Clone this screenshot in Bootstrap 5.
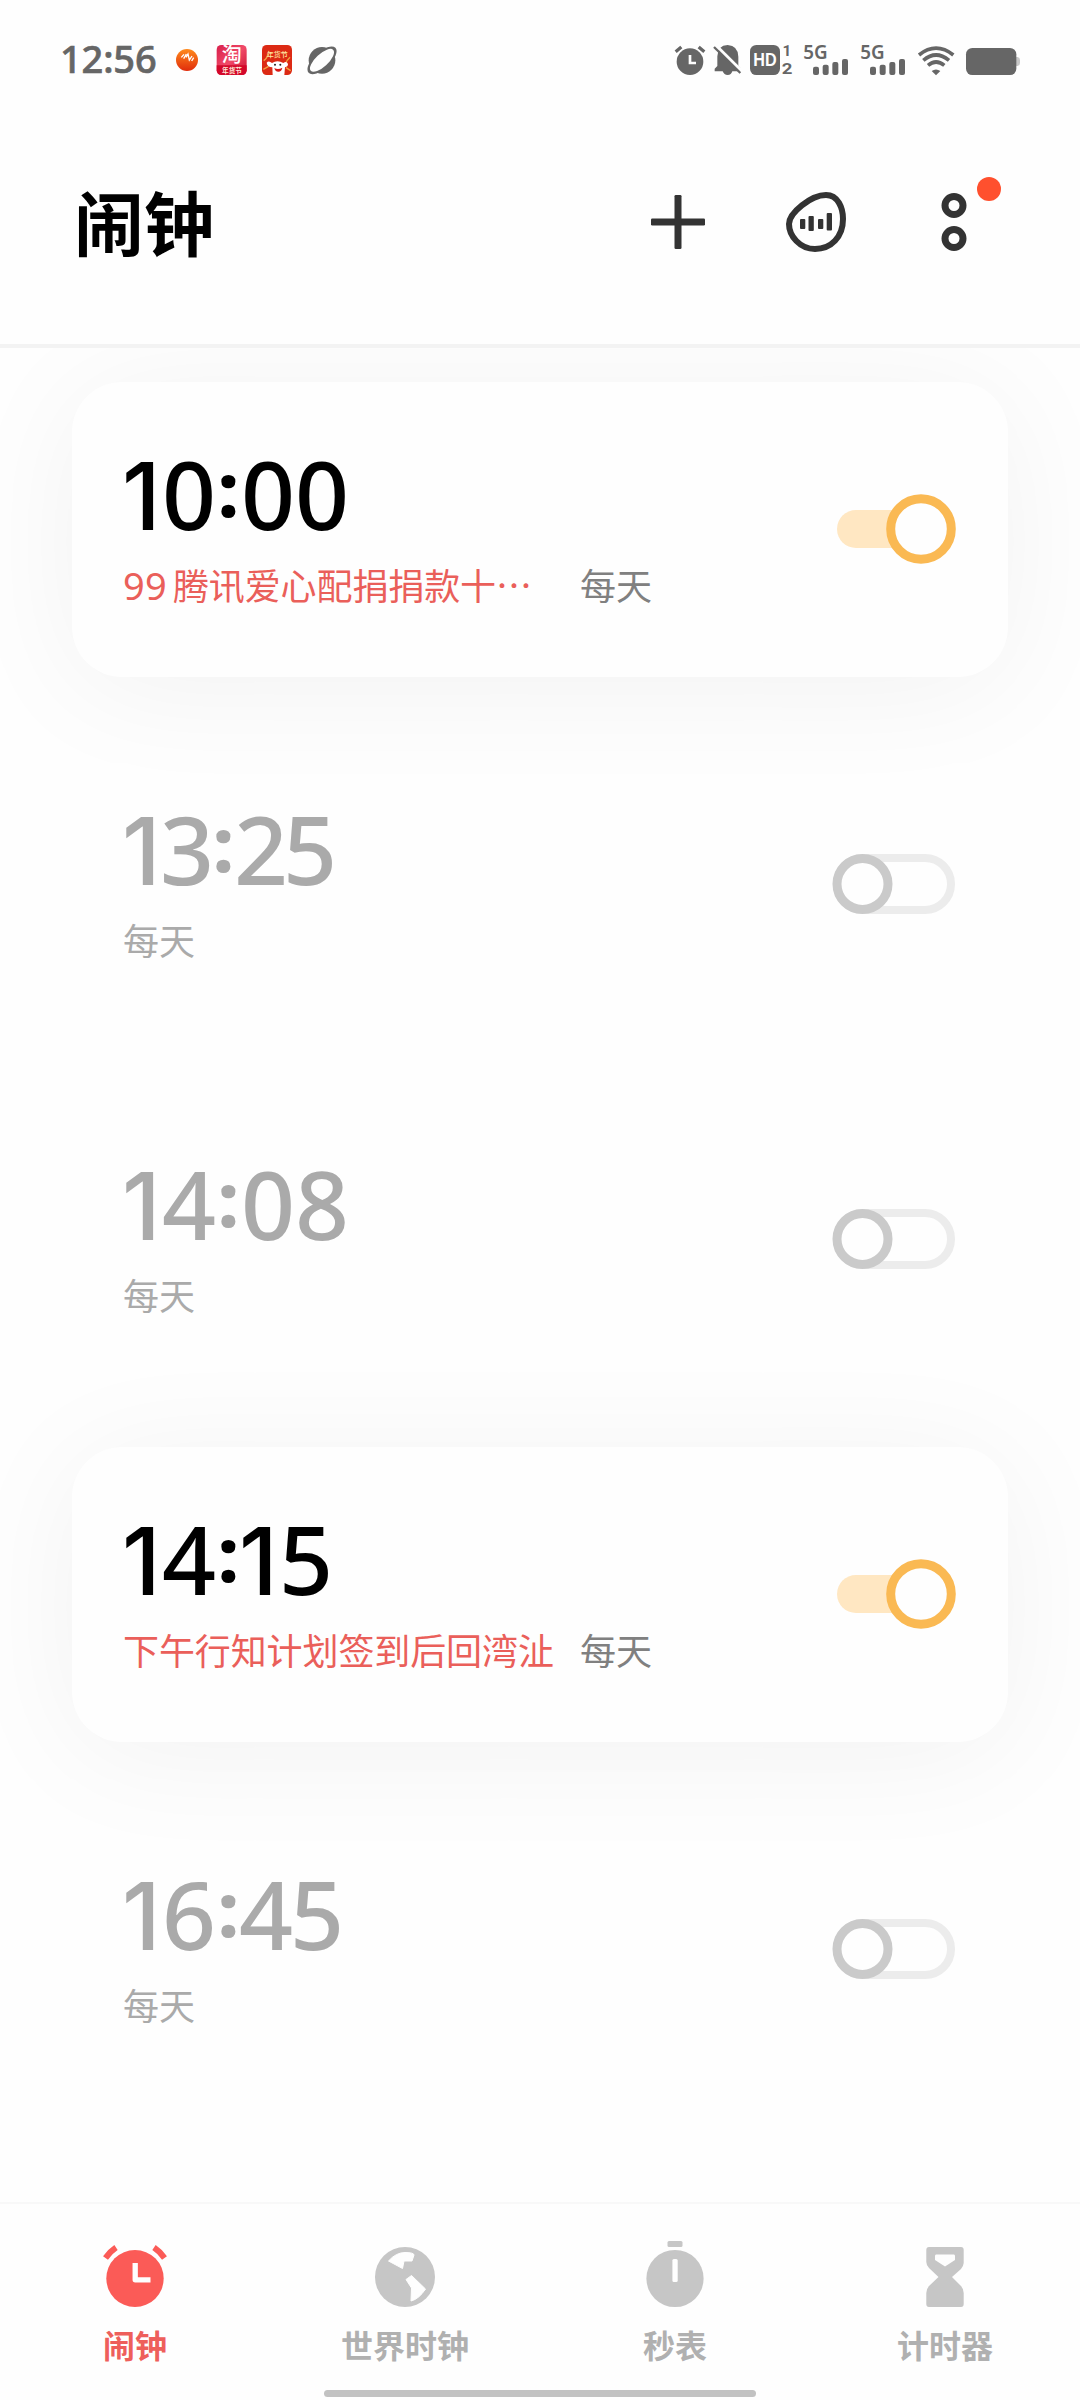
<!DOCTYPE html>
<html lang="zh-CN">
<head>
<meta charset="utf-8">
<meta name="viewport" content="width=device-width, initial-scale=1">
<title>闹钟</title>
<link href="https://cdn.jsdelivr.net/npm/bootstrap@5.3.0/dist/css/bootstrap.min.css" rel="stylesheet">
<style>
body{background:#fff;font-family:"Noto Sans CJK SC",sans-serif;color:#000}
.phone{width:1080px;height:2400px;overflow:hidden;background:#fefefe}
.topbar{height:348px;border-bottom:4px solid #f3f3f3;background:#fefefe;z-index:2}
.status{height:120px;padding:30px 40px 0 40px}
.status svg{display:block}
.titlebar{height:206px;padding-left:74px}
.titlebar h1{font-size:70px;font-weight:700;line-height:1;width:546px;padding-bottom:4px}
.alarms{padding:34px 72px 0;gap:60px;height:1854px}
.alarm{height:295px;padding:0 52px;border-radius:50px}
.alarm>svg{margin-bottom:2px}
.alarm.active-card{background:#fefefe;box-shadow:0 12px 125px rgba(0,0,0,.05)}
.clock{font-family:"Noto Sans",sans-serif;font-weight:500;font-size:94.5px;line-height:100px;height:100px;margin-top:62px;color:#aaa;white-space:nowrap}
.active-card .clock{color:#000}
.clock i{font-style:normal;width:54px;text-align:center}
.clock .one{width:38px;text-align:left;font-family:Inter,sans-serif;font-size:93px;text-indent:-2px;padding-top:2px}
.clock .tight{margin:0 -3px 0 -2px}
.clock .colon{width:25px;position:relative;top:-6px;font-weight:800;font-size:75px}
.memo{font-size:36px;line-height:40px;color:#aaa;margin-top:20px;white-space:nowrap;letter-spacing:-.1px;margin-left:-1px}
.memo .tag{color:#ea5f5a;width:457px}
.memo .num{font-family:"Noto Sans",sans-serif;font-size:38px;letter-spacing:.2px;margin-right:6px;line-height:40px}
.active-card .memo{color:#808080}
.tabs{height:198px;border-top:2px solid #f8f8f8;color:#b0b0b0;background:#fefefe}
.tabs .tab{width:270px;padding-top:33px;font-size:32px;font-weight:700;line-height:40px}
.tabs svg{display:block;margin-bottom:15px}
.tabs .on{color:#ee5f5b}
.homebar{width:432px;height:7px;border-radius:4px;background:#c2c2c2;left:324px;bottom:3px}
</style>
</head>
<body>
<main class="phone d-flex flex-column position-relative">
<header class="topbar position-relative flex-shrink-0">
  <div class="status d-flex">
    <svg width="320" height="60" viewBox="0 0 960 180">
      <defs><linearGradient id="og" x1="0" y1="0" x2="0" y2="1"><stop offset="0" stop-color="#ff8a1c"/><stop offset="1" stop-color="#e02c0c"/></linearGradient>
      <linearGradient id="tg" x1="0" y1="0" x2="1" y2="1"><stop offset="0" stop-color="#d81f4b"/><stop offset=".5" stop-color="#f04a68"/><stop offset="1" stop-color="#c8102e"/></linearGradient></defs>
      <text x="60" y="129" font-family="Noto Sans" font-weight="500" font-size="114" fill="#666" stroke="#666" stroke-width="2" textLength="290">12:56</text>
      <circle cx="441" cy="90" r="33" fill="url(#og)"/>
      <path d="M424 82l8-9M431 86l8-14M438 82l6-10 4 18 8-12M455 93l6-10" fill="none" stroke="#fff" stroke-width="4"/>
      <rect x="530" y="45" width="90" height="90" rx="14" fill="url(#tg)"/>
      <text x="575" y="97" font-size="60" text-anchor="middle" fill="#fff" font-weight="500">淘</text>
      <path d="M530 106h90v15a14 14 0 0 1-14 14h-62a14 14 0 0 1-14-14z" fill="#d3082b"/>
      <text x="576" y="128" font-size="20" text-anchor="middle" fill="#ffe9d8" font-weight="700">年货节</text>
      <rect x="666" y="45" width="90" height="90" rx="14" fill="#dc2a14"/>
      <path d="M671 92q12-8 12-20M750 82q-9 8-14 20M670 118l16-9M752 122l-14-9" stroke="#f3a341" stroke-width="4" fill="none"/>
      <text x="712" y="80" font-size="21" text-anchor="middle" fill="#ffe6a0" font-weight="500">年货节</text>
      <path d="M680 98q6-8 16 1 16-10 34 0 10-7 14 3 0 8-9 10l-2 23h-35l-1-23q-16-2-17-14z" fill="#fff"/>
      <path d="M703 114q11 7 24-1-2 12-12 12t-12-11" fill="#d91916"/><circle cx="705" cy="104" r="3" fill="#222"/><circle cx="721" cy="104" r="3" fill="#222"/>
      <circle cx="846" cy="91" r="40" fill="#666"/>
      <ellipse cx="846" cy="91" rx="55" ry="25" transform="rotate(-43 846 91)" fill="#666"/>
      <ellipse cx="846" cy="91" rx="46" ry="19" transform="rotate(-43 846 91)" fill="#fefefe"/>
    </svg>
    <svg class="ms-auto" width="380" height="60" viewBox="0 0 1140 180" fill="#666">
      <circle cx="90" cy="95" r="40"/><path d="M47 65l17-14M116 51l17 14" stroke="#666" stroke-width="10"/>
      <path d="M90 75v24h18" fill="none" stroke="#fefefe" stroke-width="8"/>
      <path d="M164 124V116L172 108V79Q173 46 203 45Q234 47 235 80V107L243 116V124H217Q214 135 203 135T188 124z"/>
      <path d="M167 45L247 125" stroke="#fefefe" stroke-width="9"/><path d="M162 51L241 129" stroke="#666" stroke-width="7"/>
      <rect x="270" y="45" width="90" height="90" rx="19"/>
      <text x="315" y="109" font-family="Liberation Sans" font-weight="700" font-size="54" text-anchor="middle" textLength="70" lengthAdjust="spacingAndGlyphs" fill="#fefefe">HD</text>
      <text x="381" y="79" font-family="Roboto" font-weight="700" font-size="46" text-anchor="middle">1</text>
      <text x="381" y="132" font-family="Roboto" font-weight="700" font-size="46" text-anchor="middle" textLength="32" lengthAdjust="spacingAndGlyphs">2</text>
      <g id="sig"><text x="430" y="88" font-family="Noto Sans" font-weight="600" font-size="60" textLength="73" lengthAdjust="spacingAndGlyphs">5G</text>
      <rect x="459" y="110" width="18" height="25" rx="6"/><rect x="488" y="104" width="18" height="31" rx="6"/><rect x="517" y="96" width="18" height="39" rx="6"/><rect x="546" y="87" width="18" height="48" rx="6"/></g>
      <use href="#sig" x="171"/>
      <g fill="none" stroke="#666" stroke-width="11"><path d="M777 75Q828 34 880 75M790 91Q828 59 867 91M804 106Q828 86 853 106"/></g>
      <path d="M815 123Q828 114 841 123L828 136z"/>
      <path d="M1066 81h7q7 2 7 9v9q0 7-7 9h-7z" fill="#c8c8c8"/>
      <rect x="918" y="54" width="151" height="81" rx="19"/>
    </svg>
  </div>
  <div class="titlebar d-flex align-items-center">
    <h1 class="mb-0">闹钟</h1>
    <svg width="460" height="206" viewBox="0 0 460 206" fill="none" stroke="#333">
      <rect x="31" y="98.500" width="54" height="7" rx="1.300" fill="#333" stroke="none"/><rect x="54.500" y="75" width="7" height="54" rx="1.300" fill="#333" stroke="none"/>
      <path d="M169 104C169 93 191 75 206 75C218 75 223 88 223 99C223 117 211 129 195 129C180 129 169 116 169 104z" stroke-width="6"/>
      <g fill="#333" stroke="none"><rect x="180" y="99" width="5.300" height="10" rx="1"/><rect x="188.500" y="96" width="5.300" height="15" rx="1"/><rect x="198" y="99" width="5.300" height="10" rx="1"/><rect x="206.700" y="93" width="5.300" height="17.500" rx="1"/></g>
      <circle cx="334" cy="85.500" r="9" stroke-width="7"/><circle cx="334" cy="118.500" r="9" stroke-width="7"/>
      <circle cx="369" cy="69" r="12" fill="#ff502e" stroke="none"/>
    </svg>
  </div>
</header>
<svg width="0" height="0" class="position-absolute"><defs>
  <g id="swOn"><rect x="5" y="16" width="80" height="38" rx="19" fill="#ffe7c2"/><circle cx="89" cy="35" r="30.300" fill="#fefefe" stroke="#fab953" stroke-width="9"/></g>
  <g id="swOff"><rect x="5" y="9" width="114" height="52" rx="26" fill="none" stroke="#ececec" stroke-width="8"/><circle cx="30.500" cy="35" r="25.500" fill="#fefefe" stroke="#cacaca" stroke-width="9"/></g>
</defs></svg>
<section class="alarms d-flex flex-column flex-shrink-0">
  <article class="alarm active-card d-flex flex-shrink-0 align-items-center justify-content-between">
    <div class="align-self-start"><div class="clock d-flex"><i class="one">1</i><i>0</i><i class="colon">:</i><i>0</i><i>0</i></div>
    <div class="memo d-flex"><span class="tag"><span class="num">99</span>腾讯爱心配捐捐款十…</span><span>每天</span></div></div>
    <svg width="124" height="70"><use href="#swOn"/></svg>
  </article>
  <article class="alarm d-flex flex-shrink-0 align-items-center justify-content-between">
    <div class="align-self-start"><div class="clock d-flex"><i class="one">1</i><i class="tight">3</i><i class="colon">:</i><i class="tight">2</i><i class="tight">5</i></div>
    <div class="memo">每天</div></div>
    <svg width="124" height="70"><use href="#swOff"/></svg>
  </article>
  <article class="alarm d-flex flex-shrink-0 align-items-center justify-content-between">
    <div class="align-self-start"><div class="clock d-flex"><i class="one">1</i><i>4</i><i class="colon">:</i><i>0</i><i>8</i></div>
    <div class="memo">每天</div></div>
    <svg width="124" height="70"><use href="#swOff"/></svg>
  </article>
  <article class="alarm active-card d-flex flex-shrink-0 align-items-center justify-content-between">
    <div class="align-self-start"><div class="clock d-flex"><i class="one">1</i><i>4</i><i class="colon">:</i><i class="one">1</i><i>5</i></div>
    <div class="memo d-flex"><span class="tag">下午行知计划签到后回湾沚</span><span>每天</span></div></div>
    <svg width="124" height="70"><use href="#swOn"/></svg>
  </article>
  <article class="alarm d-flex flex-shrink-0 align-items-center justify-content-between">
    <div class="align-self-start"><div class="clock d-flex"><i class="one">1</i><i>6</i><i class="colon">:</i><i class="tight">4</i><i>5</i></div>
    <div class="memo">每天</div></div>
    <svg width="124" height="70"><use href="#swOff"/></svg>
  </article>
</section>
<nav class="tabs d-flex flex-shrink-0 position-relative">
  <div class="tab on d-flex flex-column align-items-center">
    <svg width="80" height="72" viewBox="0 0 80 72"><ellipse cx="40" cy="41.500" rx="28.700" ry="28.500" fill="#fb5b57"/><path d="M10.500 21Q15 14.500 21 10.500M69.500 21Q65 14.500 59 10.500" fill="none" stroke="#fb5b57" stroke-width="6"/><path d="M40.200 26v16.800H55.500" fill="none" stroke="#fefefe" stroke-width="5.300" stroke-linejoin="round"/></svg>
    <span>闹钟</span></div>
  <div class="tab d-flex flex-column align-items-center">
    <svg width="80" height="72" viewBox="0 0 80 72"><circle cx="40" cy="40" r="30" fill="#c6c6c6"/><path d="M23.500 24Q31 15.500 40 15.500T49 18L47 24H39L37.500 31.500zM41 42.500L46.500 38.500L60.500 52Q54 62 46 64L46.500 51z" fill="#fefefe" stroke="#fefefe" stroke-width="1" stroke-linejoin="round"/></svg>
    <span>世界时钟</span></div>
  <div class="tab d-flex flex-column align-items-center">
    <svg width="80" height="72" viewBox="0 0 80 72"><circle cx="40" cy="41.500" r="28.600" fill="#c6c6c6"/><rect x="32.500" y="4" width="15" height="6" rx="1.500" fill="#c6c6c6"/><rect x="37.400" y="22" width="5.300" height="23" rx="1.500" fill="#fefefe"/></svg>
    <span>秒表</span></div>
  <div class="tab d-flex flex-column align-items-center">
    <svg width="80" height="72" viewBox="0 0 80 72"><path d="M24 10H56Q58.700 10 58.700 13V26Q58.500 29 56 32L47 40L56 49Q58.700 52 58.700 56V67Q58.700 70 56 70H24Q21.300 70 21.300 67V56Q21.300 52 24 49L33.500 40L24 31Q21.300 28 21.300 25V13Q21.300 10 24 10z" fill="#c6c6c6"/><path d="M31 17.500H49Q50 17.500 50 19V23L40 29.500L30 23V19Q30 17.500 31 17.500z" fill="#fefefe"/></svg>
    <span>计时器</span></div>
  <div class="homebar position-absolute"></div>
</nav>
</main>
<script src="https://cdn.jsdelivr.net/npm/bootstrap@5.3.0/dist/js/bootstrap.bundle.min.js"></script>
</body>
</html>
